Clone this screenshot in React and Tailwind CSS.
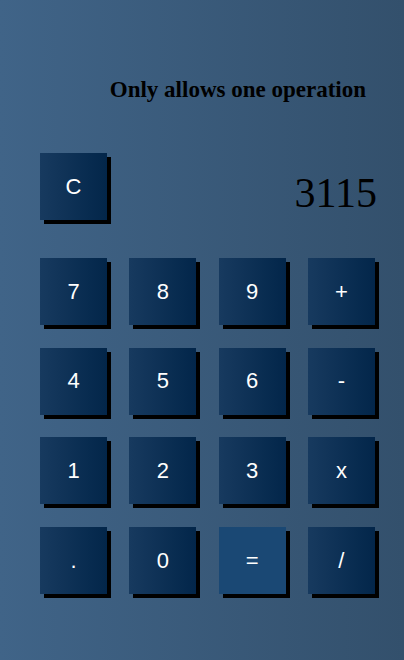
import React, { useState } from 'react';

const keys = ['7', '8', '9', '+', '4', '5', '6', '-', '1', '2', '3', 'x', '.', '0', '=', '/'];

const Key = ({ label, onClick, accent = false }) => (
  <button
    type="button"
    onClick={onClick}
    className={
      accent
        ? 'w-[67px] h-[67px] bg-[#1a4874] text-white text-[22px] leading-none shadow-[4px_4px_0_#000] flex items-center justify-center'
        : 'w-[67px] h-[67px] bg-gradient-to-r from-[#173a5f] to-[#03264a] text-white text-[22px] leading-none shadow-[4px_4px_0_#000] flex items-center justify-center'
    }
    style={{ fontFamily: '"Liberation Sans", Arial, sans-serif' }}
  >
    {label}
  </button>
);

export default function App() {
  const [display, setDisplay] = useState('3115');

  return (
    <div className="w-full h-[660px] bg-gradient-to-r from-[#406488] to-[#33506c] overflow-hidden">
      {/* hint */}
      <div
        className="pt-[77px] pr-[38px] text-right text-[23px] leading-[26px] font-bold text-black whitespace-nowrap"
        style={{ fontFamily: '"Liberation Serif", "Times New Roman", serif' }}
      >
        Only allows one operation
      </div>

      {/* clear + display */}
      <div className="mt-[50px] pl-[40px] pr-[27px] flex items-center justify-between">
        <Key label="C" onClick={() => setDisplay('')} />
        <div
          className="text-[42px] leading-[48px] text-black pt-[13px]"
          style={{ fontFamily: '"Liberation Serif", "Times New Roman", serif' }}
        >
          {display}
        </div>
      </div>

      {/* keypad */}
      <div className="mt-[38px] pl-[40px] grid grid-cols-[repeat(4,67px)] gap-x-[22.3px] gap-y-[22.7px]">
        {keys.map((k) => (
          <Key key={k} label={k} accent={k === '='} onClick={() => setDisplay((d) => d + k)} />
        ))}
      </div>
    </div>
  );
}
